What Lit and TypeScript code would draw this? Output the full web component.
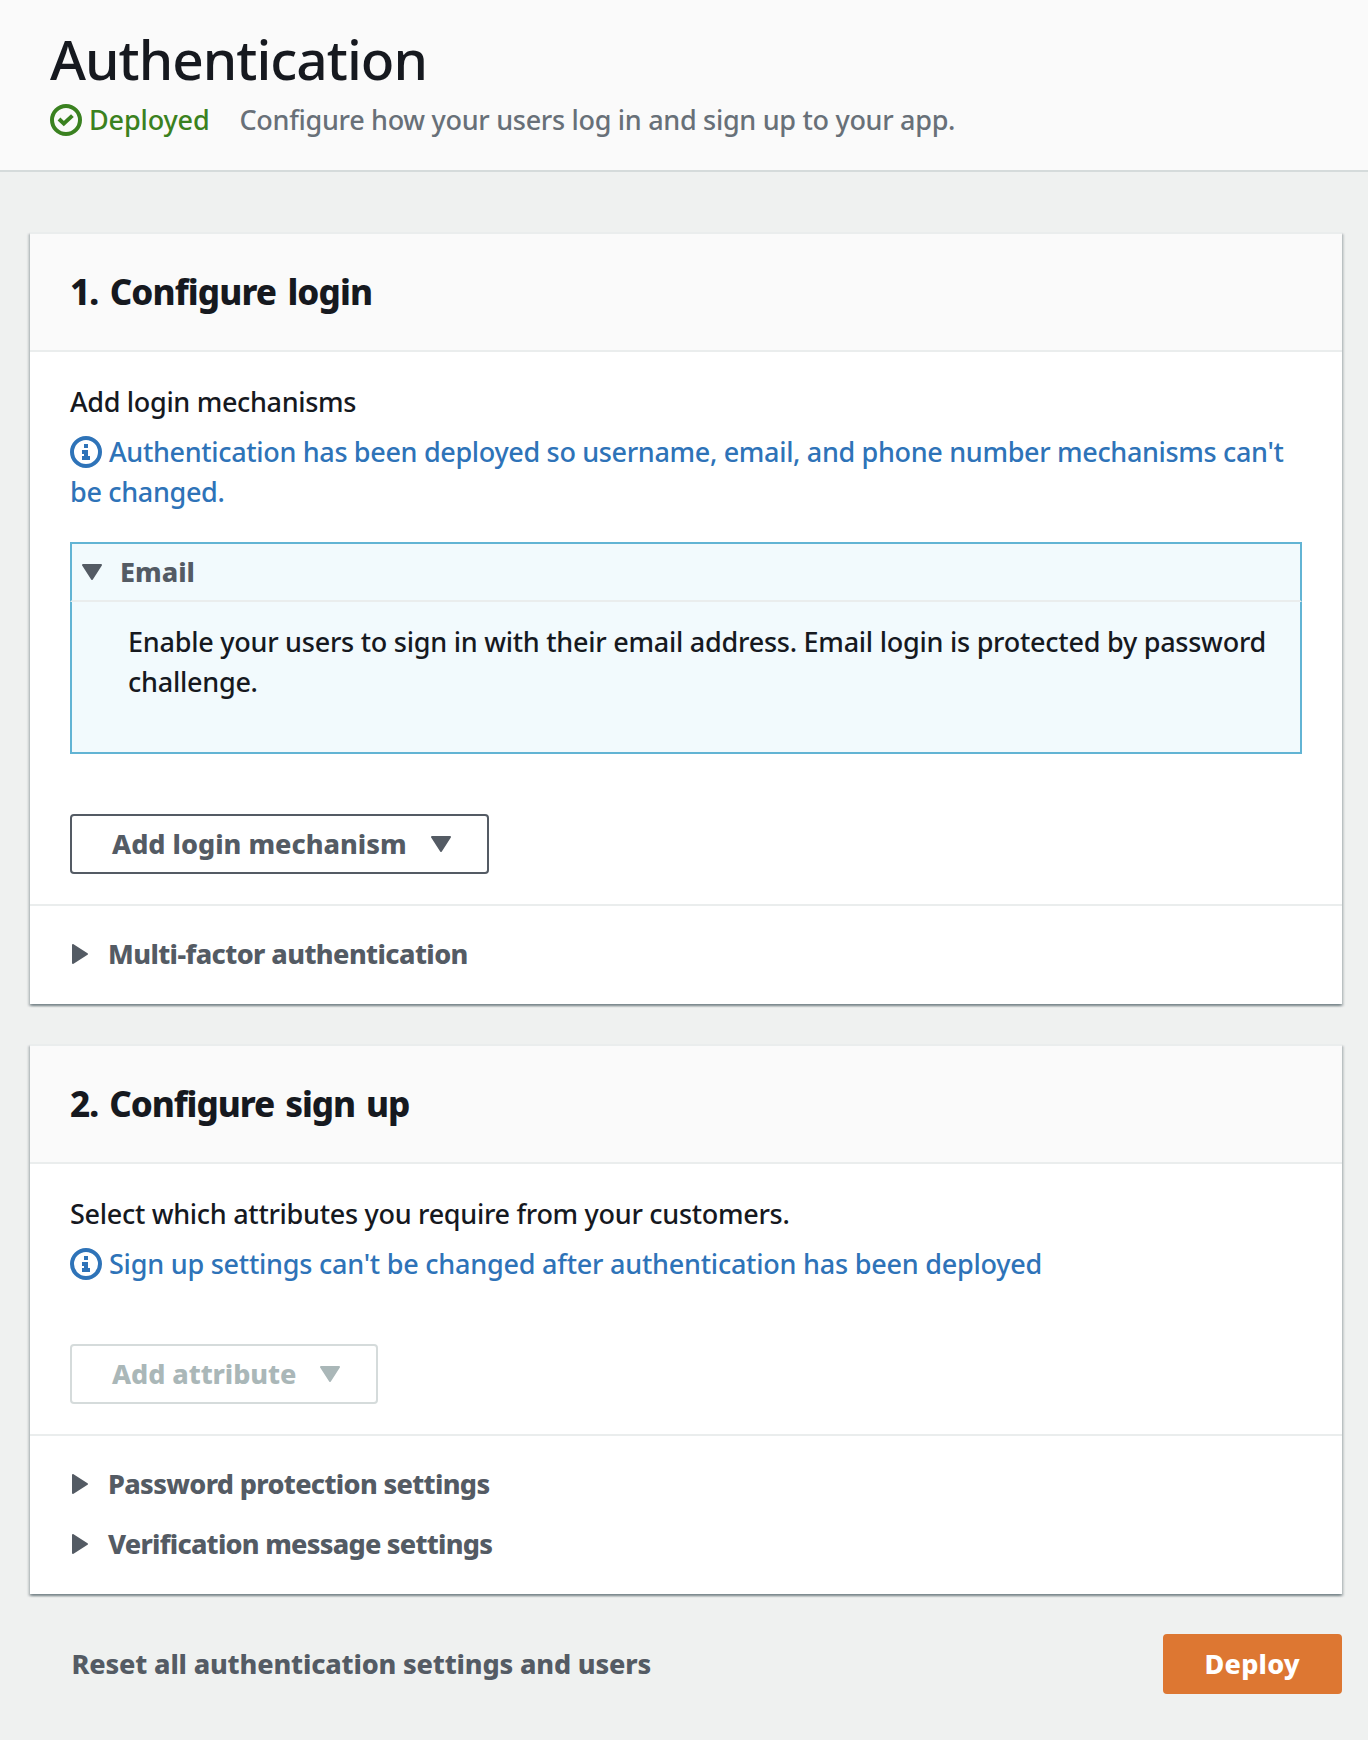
import { LitElement, html, css, nothing } from "lit";
import { customElement, property } from "lit/decorators.js";

const base = css`
  :host { display: block; font-family: "Noto Sans", "Open Sans", sans-serif; font-size: 27px; line-height: 40px; font-weight: 500; color: #16191f; }
  * { box-sizing: border-box; }
  svg { display: block; flex: none; }
  .bold { font-weight: 800; }
`;

const checkIcon = html`<svg width="32" height="32" viewBox="0 0 16 16" fill="none" stroke="currentColor" stroke-width="2">
  <circle cx="8" cy="8" r="7"></circle><path d="M4.5 7.5L6.9 9.8L11.2 5.8"></path></svg>`;

const infoIcon = html`<svg class="info-icon" width="32" height="32" viewBox="0 0 16 16" fill="none" stroke="currentColor" stroke-width="2">
  <circle cx="8" cy="8" r="7"></circle><path d="M8 6V4M6 8h2v3M6 11h4"></path></svg>`;

const caretDown = html`<svg width="20" height="16" viewBox="0 0 20 16" fill="currentColor" stroke="currentColor">
  <path d="M1 1H19L10 15Z" stroke-width="2" stroke-linejoin="round"></path></svg>`;
const caretRight = html`<svg width="16" height="20" viewBox="0 0 16 20" fill="currentColor" stroke="currentColor">
  <path d="M1 1V19L15 10Z" stroke-width="2" stroke-linejoin="round"></path></svg>`;

@customElement("settings-card")
class SettingsCard extends LitElement {
  @property() heading = "";
  static styles = [base, css`
    .card { background: #fff; border-top: 2px solid #eaeded; box-shadow: 0 2px 2px 0 rgba(0,28,36,.3), 2px 2px 2px 0 rgba(0,28,36,.15), -2px 2px 2px 0 rgba(0,28,36,.15); }
    .head { display: flex; align-items: center; height: 118px; padding: 0 40px; background: #fafafa; border-bottom: 2px solid #eaeded; }
    h2 { margin: 0; font-size: 35px; line-height: 44px; font-weight: 800; letter-spacing: -.88px; word-spacing: 3px; }
    :host([tight]) h2 { letter-spacing: -1.05px; }
    .body { padding: 30px 40px; }
    .foot { display: flex; flex-direction: column; gap: 20px; padding: 28px 40px 30px; border-top: 2px solid #eaeded; }
  `];
  render() {
    return html`<section class="card">
      <header class="head"><h2>${this.heading}</h2></header>
      <div class="body"><slot></slot></div>
      <div class="foot"><slot name="foot"></slot></div>
    </section>`;
  }
}

@customElement("expand-row")
class ExpandRow extends LitElement {
  @property() label = "";
  static styles = [base, css`
    .row { display: flex; align-items: center; gap: 20px; padding-left: 2px; color: #545b64; }
  `];
  render() {
    return html`<div class="row bold">${caretRight}<span>${this.label}</span></div>`;
  }
}

@customElement("menu-button")
class MenuButton extends LitElement {
  @property() label = "";
  @property({ type: Boolean }) disabled = false;
  @property({ type: Boolean }) primary = false;
  static styles = [base, css`
    :host { display: inline-block; vertical-align: top; }
    button { display: flex; align-items: center; gap: 24px; height: 60px; padding: 0 36px 0 40px; border: 2px solid #545b64; border-radius: 4px; background: #fff; color: #545b64; font: inherit; font-weight: 800; letter-spacing: 0.01px; }
    button.disabled { gap: 23.5px; border-color: #d5dbdb; color: #aab7b8; letter-spacing: -.07px; }
    button.primary { padding: 0 40px; border-color: #dd7732; background: #dd7732; color: #fff; letter-spacing: .23px; }
  `];
  render() {
    const kind = this.primary ? "primary" : this.disabled ? "disabled" : "";
    return html`<button class=${kind} ?disabled=${this.disabled}><span>${this.label}</span>${this.primary ? nothing : caretDown}</button>`;
  }
}

@customElement("app-root")
class AppRoot extends LitElement {
  static styles = [base, css`
    .page { min-height: 1740px; background: #eff1f0; }
    .top { padding: 29px 50px 30px; background: #fafafa; border-bottom: 2px solid #d5dbdb; }
    h1 { margin: 0 0 11px; font-size: 55px; line-height: 60px; font-weight: 500; letter-spacing: -.97px; }
    p { margin: 0; }
    .sub { display: flex; align-items: center; }
    .status { display: flex; align-items: center; gap: 7px; width: 189.5px; color: #3a8120; letter-spacing: -.15px; }
    .hint { color: #687078; letter-spacing: -.3px; }
    .main { display: flex; flex-direction: column; gap: 40px; padding: 60px 26px 46px 30px; }
    .lead { margin-bottom: 10px; letter-spacing: -.33px; }
    .lead.select { letter-spacing: -.29px; }
    .info { color: #2e73b8; letter-spacing: -.335px; }
    .info.signup { letter-spacing: -.23px; }
    .info-icon { display: inline-block; vertical-align: -6px; margin-right: 7px; }
    .option { margin: 30px 0 60px; border: 2px solid #62b4d4; background: #f2fafd; }
    .option-head { display: flex; align-items: center; gap: 18px; height: 60px; margin: -2px -2px 0; padding-left: 10px; color: #545b64; border: 2px solid #62b4d4; border-bottom-color: #eaeded; letter-spacing: 0.02px; }
    .option-body { padding: 20px 20px 50px 56px; letter-spacing: -.25px; }
    .signup-action { margin-top: 60px; height: 60px; }
    .login-action { height: 60px; }
    .mfa { letter-spacing: -.58px; }
    .password { letter-spacing: -.66px; }
    .verification { letter-spacing: -.74px; }
    .actions { display: flex; align-items: center; justify-content: space-between; height: 60px; }
    .reset { padding-left: 41.5px; color: #545b64; letter-spacing: -.155px; }
  `];
  render() {
    return html`<div class="page">
      <header class="top">
        <h1>Authentication</h1>
        <div class="sub"><div class="status">${checkIcon}<span>Deployed</span></div><p class="hint">Configure how your users log in and sign up to your app.</p></div>
      </header>
      <main class="main">
        <settings-card heading="1. Configure login">
          <p class="lead">Add login mechanisms</p>
          <p class="info">${infoIcon}<span>Authentication has been deployed so username, email, and phone number mechanisms can't be changed.</span></p>
          <div class="option">
            <div class="option-head bold">${caretDown}<span>Email</span></div>
            <p class="option-body">Enable your users to sign in with their email address. Email login is protected by password challenge.</p>
          </div>
          <div class="login-action"><menu-button label="Add login mechanism"></menu-button></div>
          <expand-row class="mfa" slot="foot" label="Multi-factor authentication"></expand-row>
        </settings-card>
        <settings-card tight heading="2. Configure sign up">
          <p class="lead select">Select which attributes you require from your customers.</p>
          <p class="info signup">${infoIcon}<span>Sign up settings can't be changed after authentication has been deployed</span></p>
          <div class="signup-action"><menu-button label="Add attribute" disabled></menu-button></div>
          <expand-row class="password" slot="foot" label="Password protection settings"></expand-row>
          <expand-row class="verification" slot="foot" label="Verification message settings"></expand-row>
        </settings-card>
        <div class="actions"><span class="reset bold">Reset all authentication settings and users</span><menu-button label="Deploy" primary></menu-button></div>
      </main>
    </div>`;
  }
}
